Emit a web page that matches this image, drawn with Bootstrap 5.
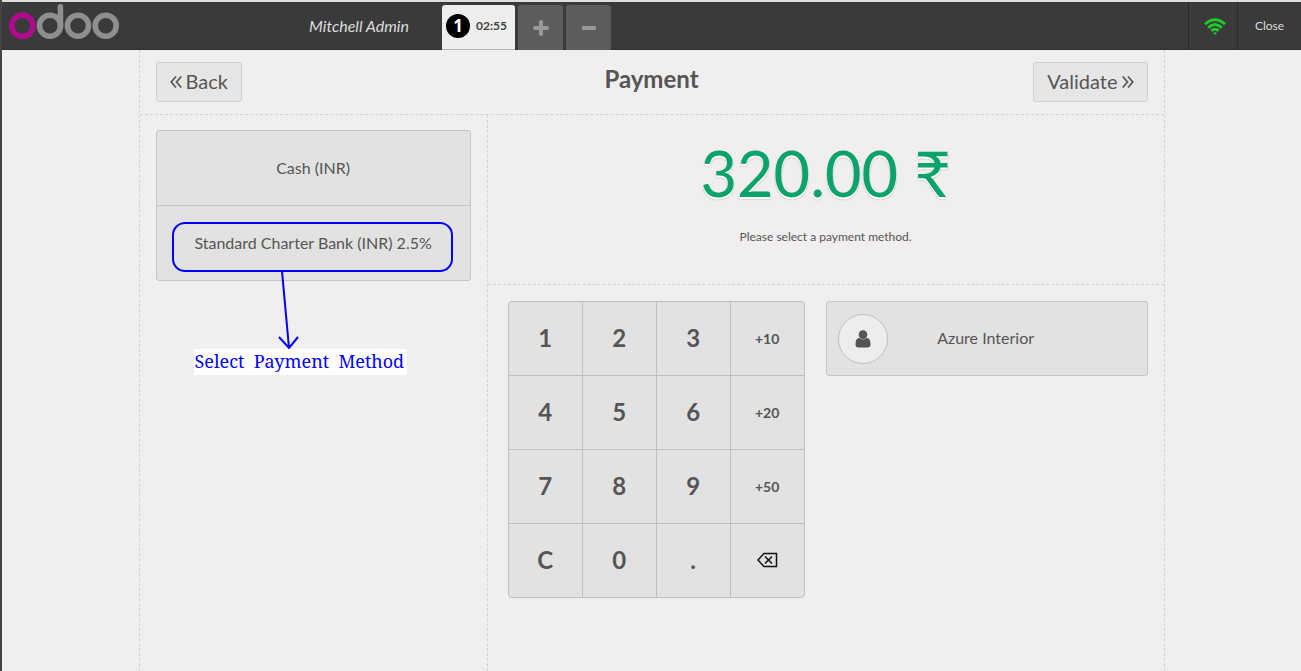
<!DOCTYPE html>
<html lang="en">
<head>
<meta charset="utf-8">
<meta name="viewport" content="width=device-width, initial-scale=1">
<title>Payment</title>
<link rel="stylesheet" href="https://cdn.jsdelivr.net/npm/bootstrap@5.3.0/dist/css/bootstrap.min.css">
<style>
  body { font-family: Lato, "Liberation Sans", sans-serif; font-size: 16px; line-height: 24px; color: #555; background: #f0eeee; border-left: 2px solid #45443f; }
  button { color: inherit; }
  .topbar { height: 50px; background: #3a3a3a; border-top: 2px solid #dedede; box-shadow: inset 0 -1px #302f2f; color: #ddd; }
  .brand-side { width: 440px; padding: 0 33px 0 6px; }
  .cashier { font-style: italic; }
  .tabs-row { gap: 3px; }
  .order-tab { height: 45px; border-radius: 3px 3px 0 0; }
  .order-tab.current { width: 73px; padding: 0 4px 2px; background: #eee; color: #444; font-size: 12px; font-weight: 700; gap: 6px; border-bottom: 1px solid #bbb6b6; }
  .order-tab.tool { width: 45px; background: #5c5c5c; color: #999; }
  .order-no { width: 24px; height: 24px; background: #000; color: #fff; font: 700 17px/24px "Open Sans", "Noto Sans", sans-serif; }
  .bar-item { border-left: 1px solid #292929; font-size: 12px; color: #ddd; }
  .wifi-item { width: 49px; padding-left: 4px; }
  .close-item { width: 64px; }
  .screen { width: 100%; max-width: 1026px; border: 1px dashed #d3d3d3; border-width: 0 1px; }
  .dash-b { border-bottom: 1px dashed #d3d3d3; }
  .screen-head { height: 65px; padding: 0 16px; }
  .screen-head h1 { font-size: 24px; line-height: 30px; font-weight: 700; margin-bottom: 6px; }
  .step-btn { height: 40px; font-size: 20px; line-height: 24px; padding: 0 13px 2px; border: 1px solid #cecece; border-radius: 3px; background: #e6e6e6; }
  .step-btn svg { margin-top: 2px; }
  .methods-col { width: 34%; border-right: 1px dashed #d3d3d3; padding: 15px 16px; }
  .methods { border: 1px solid #c6c6c6; border-radius: 3px; gap: 1px; background: #c6c6c6; overflow: hidden; }
  .methods button { height: 74px; background: #e2e2e2; padding-bottom: 2px; }
  .summary { height: 170px; padding-top: 18px; }
  .total { font-size: 63px; line-height: 80px; color: #0ba36c; text-shadow: 0 2px #fff, 0 2px 2px rgba(0,0,0,.3); }
  .hint { font-size: 12px; line-height: 18px; margin-top: 15px; }
  .details { padding: 16px 16px 16px 20px; gap: 21px; }
  .keypad { display: grid; grid-template-columns: repeat(4, 73px); grid-auto-rows: 73px; gap: 1px; background: #bfbfbf; border: 1px solid #bfbfbf; border-radius: 4px; overflow: hidden; }
  .keypad button { background: #e2e2e2; font-size: 24px; font-weight: 700; padding: 0 0 2px; }
  .keypad .quick { font-size: 14px; padding: 0; }
  .customer { height: 75px; background: #e2e2e2; border: 1px solid #c6c6c6; border-radius: 3px; padding: 0 11px; }
  .avatar { width: 50px; height: 50px; background: #ededed; border: 1px solid #bfbfbf; }
  .customer-name { padding: 0 52px 2px 0; }
  /* callout drawn over the payment methods */
  .callout-ring { left: 32px; top: 107px; width: 281px; height: 50px; border: 2px solid #00f; border-radius: 13px; pointer-events: none; }
  .callout-arrow { left: 136px; top: 156px; pointer-events: none; }
  .callout-text { left: 54px; top: 234px; width: 213px; height: 26px; background: #fff; color: #00f; font: 18px/24px "Noto Serif", "Liberation Serif", serif; white-space: pre; padding-left: 1px; }
</style>
</head>
<body class="min-vh-100 d-flex flex-column">
<header class="topbar d-flex">
  <div class="brand-side d-flex justify-content-between align-items-center">
    <svg class="align-self-start" width="112" height="40" viewBox="0 0 112 40" role="img" aria-label="odoo" fill="none" stroke-width="5.6">
      <g stroke="#8f8f8f"><circle cx="42" cy="23.700" r="10.500"/><circle cx="70" cy="23.700" r="10.500"/><circle cx="97.700" cy="23.700" r="10.500"/><path d="M52.400 24V4.800" stroke-linecap="round"/></g>
      <circle cx="14.400" cy="23.700" r="10.600" stroke="#b00b8c"/>
    </svg>
    <span class="cashier">Mitchell Admin</span>
  </div>
  <div class="tabs-row d-flex align-items-end">
    <button type="button" class="order-tab current border-start-0 border-end-0 border-top-0 d-flex align-items-center"><span class="order-no rounded-circle d-flex align-items-center justify-content-center">1</span>02:55</button>
    <button type="button" class="order-tab tool border-0 p-0 d-flex align-items-center justify-content-center" aria-label="New order"><svg width="16" height="16" viewBox="0 0 16 16"><path d="M8 2V14M2 8H14" stroke="currentColor" stroke-width="4" stroke-linecap="round"/></svg></button>
    <button type="button" class="order-tab tool border-0 p-0 d-flex align-items-center justify-content-center" aria-label="Delete order"><svg width="16" height="16" viewBox="0 0 16 16"><rect x="1" y="6" width="14" height="4" rx="1" fill="currentColor"/></svg></button>
  </div>
  <div class="d-flex ms-auto">
    <div class="bar-item wifi-item d-flex align-items-center justify-content-center">
      <svg width="22" height="17" viewBox="0 0 22 17" role="img" aria-label="Connected" fill="none" stroke="#21c92b" stroke-width="2.800"><path d="M1 6.200Q11-2.600 21 6.200M4.200 9.600Q11 3.400 17.800 9.600M7.400 12.900Q11 9.700 14.600 12.900"/><path d="M9 15Q11 13.400 13 15L11 17Z" fill="#21c92b" stroke="none"/></svg>
    </div>
    <button type="button" class="bar-item close-item bg-transparent border-top-0 border-end-0 border-bottom-0 p-0">Close</button>
  </div>
</header>
<main class="screen mx-auto flex-grow-1 d-flex flex-column">
  <div class="screen-head dash-b d-flex align-items-center justify-content-between position-relative">
    <button type="button" class="step-btn d-flex align-items-center gap-1"><svg width="12" height="14" viewBox="0 0 12 14" fill="none" stroke="currentColor" stroke-width="1.700"><path d="M6 1.500L1.200 7L6 12.500M11.300 1.500L6.500 7L11.300 12.500"/></svg>Back</button>
    <h1 class="position-absolute start-50 translate-middle-x">Payment</h1>
    <button type="button" class="step-btn d-flex align-items-center gap-1">Validate<svg width="12" height="14" viewBox="0 0 12 14" fill="none" stroke="currentColor" stroke-width="1.700"><path d="M.700 1.500L5.500 7L.700 12.500M6 1.500L10.800 7L6 12.500"/></svg></button>
  </div>
  <div class="d-flex flex-grow-1">
    <section class="methods-col flex-shrink-0 position-relative">
      <div class="methods d-grid">
        <button type="button" class="border-0">Cash (INR)</button>
        <button type="button" class="border-0">Standard Charter Bank (INR) 2.5%</button>
      </div>
      <div class="callout-ring position-absolute"></div>
      <svg class="callout-arrow position-absolute" width="28" height="80" viewBox="0 0 28 80" fill="none" stroke="#00f" stroke-width="2"><path d="M6 0L13 77M3 66L13 77L22 66"/></svg>
      <div class="callout-text position-absolute">Select  Payment  Method</div>
    </section>
    <section class="flex-grow-1">
      <div class="summary dash-b text-center">
        <div class="total">320.00 ₹</div>
        <div class="hint">Please select a payment method.</div>
      </div>
      <div class="details d-flex align-items-start">
        <div class="keypad flex-shrink-0">
          <button type="button" class="border-0">1</button><button type="button" class="border-0">2</button><button type="button" class="border-0">3</button><button type="button" class="border-0 quick">+10</button>
          <button type="button" class="border-0">4</button><button type="button" class="border-0">5</button><button type="button" class="border-0">6</button><button type="button" class="border-0 quick">+20</button>
          <button type="button" class="border-0">7</button><button type="button" class="border-0">8</button><button type="button" class="border-0">9</button><button type="button" class="border-0 quick">+50</button>
          <button type="button" class="border-0">C</button><button type="button" class="border-0">0</button><button type="button" class="border-0">.</button>
          <button type="button" class="border-0 d-flex align-items-center justify-content-center" aria-label="Backspace"><svg width="21" height="16" viewBox="0 0 21 16" fill="none" stroke="#111" stroke-width="1.500"><path d="M7 1.500H19.500V14.500H7L1 8ZM8 4.500L15 11.500M15 4.500L8 11.500"/></svg></button>
        </div>
        <button type="button" class="customer flex-grow-1 d-flex align-items-center">
          <span class="avatar rounded-circle d-flex align-items-center justify-content-center"><svg width="16" height="18" viewBox="0 0 16 18" fill="#555"><circle cx="8" cy="4.600" r="4.300"/><path d="M4.200 7.800C1.500 8.200.500 10.500.500 14.500Q.500 17.400 3.200 17.400H12.800Q15.500 17.400 15.500 14.500C15.500 10.500 14.500 8.200 11.800 7.800Q8 11.400 4.200 7.800Z"/></svg></span>
          <span class="customer-name flex-grow-1 text-center">Azure Interior</span>
        </button>
      </div>
    </section>
  </div>
</main>
<script src="https://cdn.jsdelivr.net/npm/bootstrap@5.3.0/dist/js/bootstrap.bundle.min.js"></script>
</body>
</html>
